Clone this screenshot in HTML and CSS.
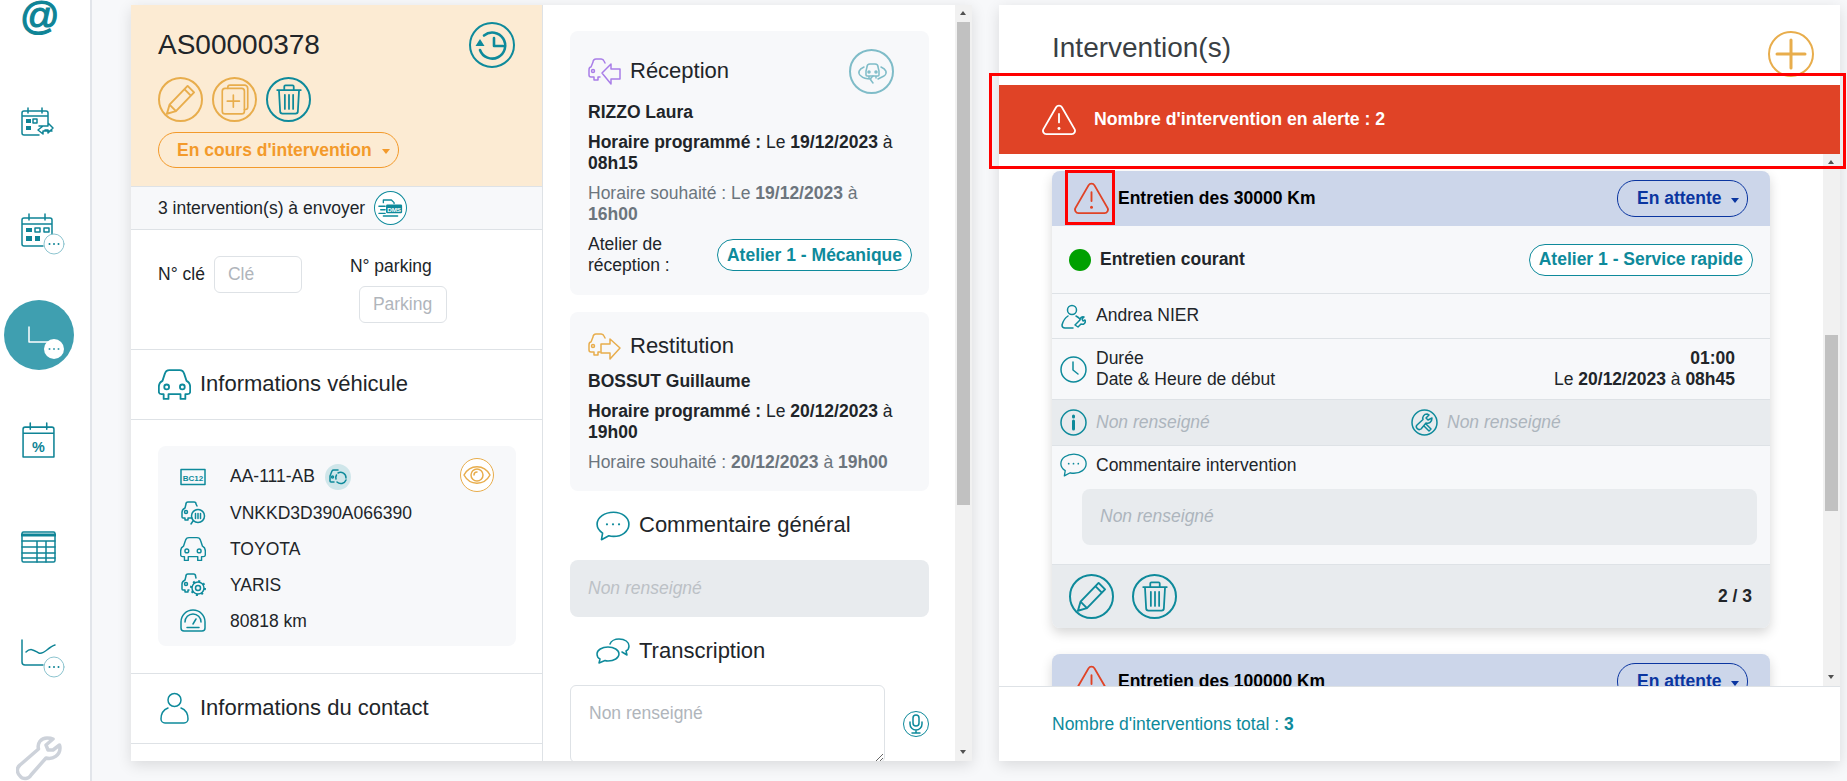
FILE: index.html
```html
<!DOCTYPE html>
<html lang="fr">
<head>
  <meta charset="UTF-8">
  <title>AS00000378 - Interventions</title>
  <link rel="stylesheet" href="styles.css">
</head>
<body>

  <!-- Icons used more than once -->
  <svg class="defs" aria-hidden="true">
    <symbol id="i-pencil" viewBox="4 4 23 24"><path d="M5 27l2-7L21 5.500l5 5L12 25zM18.500 8l5 5M7 20l5 5" /></symbol>
    <symbol id="i-trash" viewBox="5 3 22 26"><path d="M6 8h20M12 8V5a1 1 0 0 1 1-1h6a1 1 0 0 1 1 1v3M7.500 8l1 18a2 2 0 0 0 2 2h11a2 2 0 0 0 2-2l1-18M12.500 12v12M16 12v12M19.500 12v12" /></symbol>
    <symbol id="i-car" viewBox="2.300 4.300 27.400 25.400"><path d="M6 14 8 8a4 4 0 0 1 4-3h8a4 4 0 0 1 4 3l2 6c2 1 3 3 3 5v4a2 2 0 0 1-2 2h-2v4h-4v-4H11v4H7v-4H5a2 2 0 0 1-2-2v-4c0-2 1-4 3-5z" /><circle cx="9.500" cy="19" r="2" /><circle cx="22.500" cy="19" r="2" /></symbol>
    <symbol id="i-alert" viewBox="2 3 28 26"><path d="M13.600 5.500a2.800 2.800 0 0 1 4.800 0l10.400 18a2.800 2.800 0 0 1-2.400 4.200H5.600a2.800 2.800 0 0 1-2.400-4.200zM16 11v7" /><circle class="solid" cx="16" cy="23" r="1.200" /></symbol>
    <symbol id="i-comment" viewBox="1 3 31 27"><path d="M17 4c7.500 0 14 4.500 14 11s-6.500 11-14 11c-1.500 0-3-.2-4.300-.6L6 29l1-6C4 21 2 18 2 15 2 8.500 9 4 17 4z" /><circle class="solid" cx="11" cy="15" r="1" /><circle class="solid" cx="16.500" cy="15" r="1" /><circle class="solid" cx="22" cy="15" r="1" /></symbol>
    <symbol id="i-more" viewBox="0 0 22 22"><circle cx="11" cy="11" r="10" /><circle class="solid" cx="6.500" cy="11" r="1" /><circle class="solid" cx="11" cy="11" r="1" /><circle class="solid" cx="15.500" cy="11" r="1" /></symbol>
  </svg>

  <div class="app">

    <nav class="sidebar">
      <a class="nav-item"><span class="nav-at">@</span></a>
      <a class="nav-item">
        <svg class="ico nav-cal" viewBox="0 0 35 32"><path d="M27 17V6a2 2 0 0 0-2-2H3a2 2 0 0 0-2 2v20a2 2 0 0 0 2 2h15M1 9h26M7 1v5M21 1v5M18 19h9v-3l5 5-5 5v-3h-3M22 19l-5 4 5 4v-3h9" /><rect class="solid" x="5" y="12" width="5" height="4" /><rect x="12" y="12" width="4" height="4" /><rect class="solid" x="5" y="19" width="5" height="4" /></svg>
      </a>
      <a class="nav-item">
        <svg class="ico nav-bubble" width="44" height="42" viewBox="0 0 44 42"><path d="M31 25V7a2 2 0 0 0-2-2H3a2 2 0 0 0-2 2v24a2 2 0 0 0 2 2h19M1 11h30M8 1v6M24 1v6" /><rect class="solid" x="5" y="15" width="6" height="4" /><rect x="14" y="15" width="5" height="4" /><rect x="23" y="15" width="5" height="4" /><rect class="solid" x="5" y="23" width="6" height="5" /><rect class="solid" x="14" y="23" width="5" height="5" /><svg x="22" y="20" width="22" height="22" class="more-thin"><use href="#i-more" /></svg></svg>
      </a>
      <a class="nav-item">
        <span class="nav-active">
          <svg class="ico-white" width="70" height="70" viewBox="0 0 70 70"><path d="M25 27v15h20" /><circle class="solid" cx="50" cy="49" r="10" /><circle class="dot" cx="45.500" cy="49" r="1" /><circle class="dot" cx="50" cy="49" r="1" /><circle class="dot" cx="54.500" cy="49" r="1" /></svg>
        </span>
      </a>
      <a class="nav-item">
        <svg class="ico nav-cal" viewBox="0 0 34 36"><path d="M4 5h26a2 2 0 0 1 2 2v27H2V7a2 2 0 0 1 2-2zM2 11h30M9 1v6M25 1v6" /><text class="nav-pct" x="17" y="29" text-anchor="middle">%</text></svg>
      </a>
      <a class="nav-item">
        <svg class="ico nav-cal" viewBox="0 0 35 32"><rect x="1" y="1" width="33" height="30" rx="1.500" /><path class="thick" d="M1 4h33" /><path d="M1 10h33M1 16h33M1 22h33M1 27h33M16 10v21M25 10v21" /></svg>
      </a>
      <a class="nav-item">
        <svg class="ico nav-bubble" width="44" height="39" viewBox="0 0 44 39"><path d="M1 1v22a3 3 0 0 0 3 3h18M5 13c5-5 9-1 13 1 5 2 9-6 16-8" /><svg x="22" y="17" width="22" height="22" class="more-thin"><use href="#i-more" /></svg></svg>
      </a>
      <a class="nav-item nav-wrench">
        <svg class="ico-grey" width="46" height="46" viewBox="0 0 46 46"><path d="M31 2c-6 0-10 5-8.500 11L4 29c-4 3-3 8 0 11 3 4 9 3 11-1l15-17c7 2 14-3 14-10 0-1 0-2-.5-3L37 14h-5l-2-5 7-6c-2-1-4-1-6-1z" /></svg>
      </a>
    </nav>

    <main class="content">

      <!-- Dossier -->
      <section class="panel panel-file">
        <div class="col-info">
          <div class="file-head">
            <div class="file-title-row">
              <h1 class="file-title">AS00000378</h1>
              <button class="round round-teal round-big"><svg class="stroke-bold" width="36" height="36" viewBox="0 0 36 36"><path d="M10 8.500A13 13 0 1 1 6 23M20 11v8h9" /><path class="solid" d="M1.500 19h9L6 12z" /></svg></button>
            </div>
            <div class="file-actions">
              <button class="round round-orange"><svg width="31" height="31"><use href="#i-pencil" /></svg></button>
              <button class="round round-orange"><svg width="28" height="31" viewBox="4 2 25 28"><path d="M10 6V5a2 2 0 0 1 2-2h13a3 3 0 0 1 3 3v17a2 2 0 0 1-2 2h-1" /><rect x="5" y="6" width="20" height="23" rx="2.500" /><path d="M15 12v11M9.500 17.500h11" /></svg></button>
              <button class="round round-teal"><svg width="26" height="31"><use href="#i-trash" /></svg></button>
            </div>
            <div class="pill pill-status">En cours d'intervention <span class="caret"></span></div>
          </div>

          <div class="send-row">
            3 intervention(s) à envoyer
            <span class="round round-teal round-send"><svg width="25" height="20" viewBox="0 0 28 22"><path d="M6 5V2h9l3 3v1M1 9h7M3 13h5M1 17h7M6 20h16" /><rect class="solid" x="9" y="7" width="18" height="10" rx="1.500" /><text class="dms" x="18" y="15" text-anchor="middle">DMS</text></svg></span>
          </div>

          <div class="key-form">
            <div class="key-field">
              <label>N° clé</label>
              <input class="field-input" placeholder="Clé">
            </div>
            <div class="parking-field">
              <label>N° parking</label>
              <input class="field-input" placeholder="Parking">
            </div>
          </div>

          <h2 class="section-title"><svg class="ico-teal" width="33" height="33"><use href="#i-car" /></svg><span>Informations véhicule</span></h2>

          <div class="vehicle-wrap">
            <div class="vehicle-box">
              <div class="vehicle-row vehicle-row-first">
                <svg class="ico-teal" width="26" height="26" viewBox="0 0 26 26"><rect x="1" y="5.500" width="24" height="15" /><text class="plate" x="13" y="16.500" text-anchor="middle">BC12</text></svg>
                AA-111-AB
                <span class="swap-badge"><svg class="ico-teal" width="20" height="20" viewBox="0 0 20 20"><path d="M6 15H3a1 1 0 0 1-1-1V9l2-5a2 2 0 0 1 2-1h4" /><circle cx="4.500" cy="10" r="1" /><path d="M10 6a5.500 5.500 0 0 1 8 5M18 13a5.500 5.500 0 0 1-9 2M8 12a5 5 0 0 1 .5-4" /></svg></span>
                <button class="round round-orange round-eye"><svg width="28" height="20" viewBox="0 0 28 20"><path d="M1 10c6-11 20-11 26 0-6 11-20 11-26 0z" /><circle cx="14" cy="10" r="6" /><path d="M11 10a3 3 0 0 1 3-3" /></svg></button>
              </div>
              <div class="vehicle-row">
                <svg class="ico-teal" width="26" height="26" viewBox="0 0 26 26"><path d="M17 6l-1-2a2 2 0 0 0-2-2H8a2 2 0 0 0-2 2L5 8c-2 1-3 2-3 4v5a1 1 0 0 0 1 1h2v2h3v-2h4" /><circle cx="6" cy="12" r="1.500" /><circle cx="18" cy="16" r="6.500" /><path d="M15.500 13.500v5M18 13.500v5M20.500 13.500v5M13 21l-2 3" /></svg>
                VNKKD3D390A066390
              </div>
              <div class="vehicle-row">
                <svg class="ico-teal" width="26" height="26"><use href="#i-car" /></svg>
                TOYOTA
              </div>
              <div class="vehicle-row">
                <svg class="ico-teal" width="26" height="26" viewBox="0 0 26 26"><path d="M16 6l-.500-2a2 2 0 0 0-2-2H8a2 2 0 0 0-2 2L5 8c-2 1-3 2-3 4v5a1 1 0 0 0 1 1h2v2h3v-2h1" /><circle cx="6" cy="12" r="1.500" /><circle cx="18" cy="16" r="2.500" /><circle cx="18" cy="16" r="6" /><circle cx="18" cy="16" r="7" stroke-dasharray="2 3.500" stroke-width="2" stroke-linecap="butt" /></svg>
                YARIS
              </div>
              <div class="vehicle-row">
                <svg class="ico-teal" width="26" height="26" viewBox="0 0 26 26"><path d="M4 23a3 3 0 0 1-3-3v-6a12 12 0 0 1 24 0v6a3 3 0 0 1-3 3zM5 14a8 8 0 0 1 16 0M7 19.500h12M13 16l3-5" /></svg>
                80818 km
              </div>
            </div>
          </div>

          <h2 class="section-title"><svg class="ico-teal" width="33" height="33" viewBox="0 0 33 33"><circle cx="16.500" cy="8" r="6.500" /><path d="M10 16C5 18 3 22 3 27a4 4 0 0 0 4 4h19a4 4 0 0 0 4-4c0-5-2-9-7-11" /></svg><span>Informations du contact</span></h2>
        </div>

        <div class="col-times">
          <div class="time-box">
            <div class="time-head time-head-tall">
              <svg class="ico-purple" width="34" height="27" viewBox="0 0 34 27"><path d="M13 19h-2v3H7v-3H4a2 2 0 0 1-2-2v-5c0-2 1-3 2-3l2-5a3 3 0 0 1 3-3h5a3 3 0 0 1 3 2l1 2" /><circle cx="6" cy="13" r="1.500" /><path d="M15 15l9-9v5h9v10h-9v5z" /></svg>
              <h3>Réception</h3>
              <button class="round round-pale"><svg class="ico-pale" width="32" height="32" viewBox="0 0 32 32"><path d="M10 15l1-4a3 3 0 0 1 3-3h5a3 3 0 0 1 3 3l1 4v4a1 1 0 0 1-1 1H11a1 1 0 0 1-1-1zM13 20v2M20 20v2" /><circle cx="13" cy="16" r="1" /><circle cx="20" cy="16" r="1" /><path d="M8 11C3 13 1 17 5 20c2 2 6 3 10 3M25 11c5 2 7 6 3 9-2 1-4 2-6 3M17 20l-3 3 3 4" /></svg></button>
            </div>
            <p class="strong">RIZZO Laura</p>
            <p><b>Horaire programmé :</b> Le <b>19/12/2023</b> à<br><b>08h15</b></p>
            <p class="muted">Horaire souhaité : Le <b>19/12/2023</b> à<br><b>16h00</b></p>
            <div class="workshop-row">
              <span class="workshop-label">Atelier de réception :</span>
              <span class="pill pill-teal">Atelier 1 - Mécanique</span>
            </div>
          </div>

          <div class="time-box">
            <div class="time-head">
              <svg class="ico-orange" width="34" height="27" viewBox="0 0 34 27"><path d="M13 19h-2v3H7v-3H4a2 2 0 0 1-2-2v-5c0-2 1-3 2-3l2-5a3 3 0 0 1 3-3h5a3 3 0 0 1 3 2l1 2" /><circle cx="6" cy="13" r="1.500" /><path d="M33 15l-10-9v5h-9v9h9v6z" /></svg>
              <h3>Restitution</h3>
            </div>
            <p class="strong">BOSSUT Guillaume</p>
            <p><b>Horaire programmé :</b> Le <b>20/12/2023</b> à<br><b>19h00</b></p>
            <p class="muted">Horaire souhaité : <b>20/12/2023</b> à <b>19h00</b></p>
          </div>

          <div class="note-title note-title-first"><svg class="ico-teal" width="34" height="30"><use href="#i-comment" /></svg><h3>Commentaire général</h3></div>
          <div class="note-empty">Non renseigné</div>

          <div class="note-title"><svg class="ico-teal" width="34" height="26" viewBox="0 0 34 26"><path d="M12 9c6 0 11 3 11 7s-5 7-11 7c-1 0-2 0-3-.5L3 25l1-4c-2-1-3-3-3-5 0-4 5-7 11-7z" /><path d="M14 6c1-3 5-5 9-5 6 0 10 3 10 7 0 2-1 4-3 5l1 4-5-3" /></svg><h3>Transcription</h3></div>
          <div class="transcript-row">
            <textarea class="transcript" placeholder="Non renseigné"></textarea>
            <button class="round round-teal round-mic"><svg width="20" height="20" viewBox="0 0 20 20"><rect x="7" y="1" width="6" height="11" rx="3" /><path d="M4 8v2a6 6 0 0 0 12 0V8M10 16v3M6 19h8" /></svg></button>
          </div>
        </div>

        <div class="vbar">
          <span class="arrow-up"></span>
          <span class="thumb thumb-file"></span>
          <span class="arrow-down"></span>
        </div>
      </section>

      <!-- Interventions -->
      <section class="panel panel-jobs">
        <div class="jobs-head">
          <h2 class="jobs-title">Intervention(s)</h2>
          <button class="round round-orange round-add"><svg width="32" height="32" viewBox="0 0 32 32"><path class="thick" d="M2 16h28M16 2v28" /></svg></button>
        </div>

        <div class="alert-bar">
          <svg class="ico-white-line" width="34" height="32"><use href="#i-alert" /></svg>
          Nombre d'intervention en alerte : 2
        </div>

        <div class="jobs-body">
          <div class="jobs-list">
            <article class="job-card">
              <header class="job-head">
                <svg class="ico-red" width="35" height="33"><use href="#i-alert" /></svg>
                <span class="job-name">Entretien des 30000 Km</span>
                <span class="pill pill-blue">En attente <span class="caret"></span></span>
                <span class="mark-small"></span>
              </header>
              <div class="job-row job-type">
                <span class="dot-green"></span>
                <b>Entretien courant</b>
                <span class="pill pill-teal">Atelier 1 - Service rapide</span>
              </div>
              <div class="job-row job-person">
                <span class="cell"><svg class="ico-teal" width="25" height="25" viewBox="0 0 25 25"><circle cx="11" cy="6" r="4.500" /><path d="M7 12c-3 2-5 5-6 9 0 2 1 3 3 3h8M15 12c2 1 3 2 4 3" /><path d="M14 21l5-5a3 3 0 0 1 4-3l-2 2 1 2 2-1a3 3 0 0 1-4 4l-3 3z" /></svg></span>
                <span>Andrea NIER</span>
              </div>
              <div class="job-row job-time">
                <span class="cell"><svg class="ico-teal" width="27" height="27" viewBox="0 0 27 27"><circle cx="13.500" cy="13.500" r="12.500" /><path d="M13 6v8l5 4" /></svg></span>
                <div>Durée<br>Date &amp; Heure de début</div>
                <div class="job-time-values"><b>01:00</b><br>Le <b>20/12/2023</b> à <b>08h45</b></div>
              </div>
              <div class="job-row job-empty">
                <div class="job-empty-item">
                  <span class="cell"><svg class="ico-teal" width="27" height="27" viewBox="0 0 27 27"><circle cx="13.500" cy="13.500" r="12.500" /><path class="thick" d="M13.500 12v8M13.500 7v1" /></svg></span>
                  <i>Non renseigné</i>
                </div>
                <div class="job-empty-item">
                  <span class="cell"><svg class="ico-teal" width="27" height="27" viewBox="0 0 27 27"><circle cx="13.500" cy="13.500" r="12.500" /><path d="M16 5c-3 0-5 3-4 5.500L6 16c-2 2 1 6 4 4l5-6c3 1 6-1 6-5l-4 2-2-2 3-3zM15 15l5 5-2 2-5-5" /></svg></span>
                  <i>Non renseigné</i>
                </div>
              </div>
              <div class="job-comment">
                <div class="job-comment-head">
                  <span class="cell"><svg class="ico-teal" width="27" height="24"><use href="#i-comment" /></svg></span>
                  Commentaire intervention
                </div>
                <div class="job-comment-box"><i>Non renseigné</i></div>
              </div>
              <footer class="job-foot">
                <button class="round round-teal"><svg width="31" height="31"><use href="#i-pencil" /></svg></button>
                <button class="round round-teal"><svg width="26" height="31"><use href="#i-trash" /></svg></button>
                <b class="job-count">2 / 3</b>
              </footer>
            </article>

            <article class="job-card">
              <header class="job-head">
                <svg class="ico-red" width="35" height="33"><use href="#i-alert" /></svg>
                <span class="job-name">Entretien des 100000 Km</span>
                <span class="pill pill-blue">En attente <span class="caret"></span></span>
              </header>
            </article>
          </div>

          <div class="vbar">
            <span class="arrow-up"></span>
            <span class="thumb thumb-jobs"></span>
            <span class="arrow-down"></span>
          </div>
        </div>

        <div class="jobs-foot">Nombre d'interventions total : <b>3</b></div>
      </section>
    </main>
  </div>

  <!-- Red frame drawn over the alert bar -->
  <div class="mark-alert"></div>

</body>
</html>
```

FILE: styles.css
```css
/* Basic Styles */
* {
  box-sizing: border-box;
}

body {
  font-family: "Liberation Sans", Arial, sans-serif;
  font-size: 17.5px;
  line-height: 21px;
  color: #212529;
  background-color: #f7f8fa;
  margin: 0;
  height: 781px;
  overflow: hidden;
}

h1, h2, h3, p {
  margin: 0;
  font-weight: 400;
}

button {
  padding: 0;
  font: inherit;
}

svg {
  fill: none;
  stroke: currentColor;
  stroke-width: 1.5;
  stroke-linecap: round;
  stroke-linejoin: round;
  flex: none;
}

svg .solid {
  fill: currentColor;
  stroke: none;
}

svg .thick {
  stroke-width: 3;
}

.defs {
  display: none;
}

.app {
  display: flex;
  height: 781px;
}

/* Sidebar */
.sidebar {
  width: 92px;
  height: 781px;
  flex: none;
  overflow: hidden;
  background-color: #fff;
  border-right: 2px solid #e2e5ea;
  color: #0f8496;
}

.nav-item {
  display: flex;
  align-items: center;
  height: 106px;
  padding-left: 20px;
}

.nav-item:first-child {
  margin-top: -36px;
}

.nav-at {
  font-size: 39px;
  line-height: 40px;
  padding-bottom: 3px;
  color: #0f8496;
  -webkit-text-stroke: 1.200px #0f8496;
}

.nav-cal {
  width: 35px;
  margin-left: 1px;
}

.nav-bubble {
  margin-top: 10px;
  margin-left: 1px;
}

.nav-pct {
  font-family: "Liberation Sans", sans-serif;
  font-size: 14px;
  font-weight: 700;
  fill: currentColor;
  stroke: none;
}

.more-thin {
  fill: #fff;
  stroke: #8cc4cf;
  stroke-width: 1;
  color: #0f8496;
}

.nav-active {
  display: block;
  width: 70px;
  height: 70px;
  margin-left: -16px;
  border-radius: 50%;
  background-color: #3f9fb0;
}

.ico-white {
  display: block;
  stroke: #fff;
  color: #fff;
}

.ico-white .dot {
  fill: #3f9fb0;
  stroke: none;
}

.nav-wrench {
  padding-left: 16px;
}

.ico-grey {
  stroke: #cdd2da;
  stroke-width: 3.500;
}

/* Colored icons */
.ico-teal {
  color: #0e8a9b;
}

.ico-purple {
  color: #a97ee8;
}

.ico-orange {
  color: #e8ad4c;
}

.ico-pale {
  color: #7fbcc8;
}

.ico-red {
  color: #e04326;
}

.ico-white-line {
  color: #fff;
}

.stroke-bold {
  stroke-width: 2.600;
}

/* Round buttons */
.round {
  display: inline-flex;
  align-items: center;
  justify-content: center;
  flex: none;
  width: 45px;
  height: 45px;
  border-radius: 50%;
  background-color: transparent;
}

.round-orange {
  border: 2px solid #e8ad4c;
  color: #e8ad4c;
}

.round-teal {
  border: 2px solid #0e8a9b;
  color: #0e8a9b;
}

.round-big {
  width: 46px;
  height: 46px;
}

.round-pale {
  margin-left: auto;
  margin-right: 18px;
  border: 2px solid #7fbcc8;
}

.round-send {
  width: 33px;
  height: 34px;
  border-width: 1px;
  background-color: #fff;
}

.round-eye {
  width: 34px;
  height: 34px;
  border-width: 1px;
  margin-left: auto;
  margin-top: -3px;
  background-color: #fff;
}

.round-mic {
  width: 26px;
  height: 26px;
  border-width: 1px;
  margin-left: 18px;
}

.round-add {
  width: 46px;
  height: 46px;
}

/* Pills */
.pill {
  display: inline-flex;
  align-items: center;
  font-weight: 700;
  background-color: #fff;
  border: 1px solid;
  border-radius: 18px;
  white-space: nowrap;
}

.pill-status {
  width: 241px;
  height: 36px;
  margin-top: 10px;
  padding-left: 18px;
  color: #f39a2b;
  background-color: transparent;
}

.pill-teal {
  height: 32px;
  padding: 0 9px;
  color: #0e8a9b;
}

.pill-blue {
  width: 131px;
  height: 37px;
  margin-left: auto;
  padding-left: 19px;
  color: #0a35a0;
  background-color: transparent;
}

.caret {
  width: 0;
  height: 0;
  margin-left: auto;
  margin-right: 8px;
  margin-top: 3px;
  border-left: 4px solid transparent;
  border-right: 4px solid transparent;
  border-top: 5px solid currentColor;
}

/* Panels */
.content {
  display: flex;
  gap: 27px;
  padding: 5px 0 0 39px;
}

.panel {
  width: 841px;
  height: 756px;
  background-color: #fff;
  box-shadow: 0 4px 14px rgba(0, 0, 0, 0.12);
  overflow: hidden;
}

.panel-file {
  display: flex;
}

.col-info {
  width: 412px;
  flex: none;
  border-right: 1px solid #dee2e6;
}

.file-head {
  height: 181px;
  padding: 17px 27px 0;
  background-color: #fcebd3;
}

.file-title-row {
  display: flex;
  align-items: center;
  justify-content: space-between;
}

.file-title {
  font-size: 28px;
  line-height: 34px;
}

.file-actions {
  display: flex;
  gap: 9px;
  margin-top: 9px;
}

.send-row {
  display: flex;
  align-items: center;
  gap: 9px;
  height: 44px;
  padding-left: 27px;
  background-color: #f7f8fa;
  border-top: 1px solid #dee2e6;
  border-bottom: 1px solid #dee2e6;
}

.key-form {
  display: flex;
  height: 120px;
  padding: 26px 27px 0;
  border-bottom: 1px solid #dee2e6;
}

.key-field {
  display: flex;
  align-items: center;
  gap: 9px;
  height: 37px;
}

.parking-field {
  margin-left: 48px;
}

.parking-field .field-input {
  display: block;
  margin: 9px 0 0 9px;
}

.field-input {
  width: 88px;
  height: 37px;
  padding: 0 13px;
  font: inherit;
  border: 1px solid #dee2e6;
  border-radius: 6px;
}

.field-input::placeholder,
.transcript::placeholder {
  color: #b0b5bb;
  opacity: 1;
}

.section-title {
  display: flex;
  align-items: center;
  gap: 9px;
  height: 70px;
  padding-left: 27px;
  font-size: 22px;
  border-bottom: 1px solid #dee2e6;
}

.section-title span {
  padding-bottom: 2px;
}

.vehicle-wrap {
  height: 254px;
  padding: 26px 26px 0 27px;
  border-bottom: 1px solid #dee2e6;
}

.vehicle-box {
  height: 200px;
  padding: 12px 22px 0;
  background-color: #f7f8fa;
  border-radius: 8px;
}

.vehicle-row {
  display: flex;
  align-items: center;
  gap: 24px;
  height: 36px;
}

.vehicle-row-first {
  height: 37px;
}

.swap-badge {
  display: flex;
  align-items: center;
  justify-content: center;
  width: 26px;
  height: 26px;
  margin-left: -14px;
  border-radius: 50%;
  background-color: #cfe6ea;
}

.plate {
  font-family: "Liberation Sans", sans-serif;
  font-size: 8px;
  font-weight: 700;
  fill: currentColor;
  stroke: none;
}

.dms {
  font-family: "Liberation Sans", sans-serif;
  font-size: 7px;
  font-weight: 700;
  fill: #fff;
  stroke: none;
}

/* Reception and restitution */
.col-times {
  width: 412px;
  flex: none;
  padding: 26px 26px 0 27px;
  overflow: hidden;
}

.time-box {
  padding: 18px 17px 18px 18px;
  margin-bottom: 17px;
  background-color: #f7f8fa;
  border-radius: 8px;
}

.time-head {
  display: flex;
  align-items: center;
  gap: 9px;
  height: 32px;
  margin-left: -1px;
}

.time-head-tall {
  height: 45px;
  margin-bottom: -1px;
}

.time-head h3,
.note-title h3 {
  font-size: 22px;
  padding-bottom: 2px;
}

.time-box p,
.workshop-row {
  margin-top: 9px;
}

.time-box .workshop-row {
  padding-bottom: 1px;
}

.strong {
  font-weight: 700;
}

.muted {
  color: #6c757d;
}

.workshop-row {
  display: flex;
  align-items: center;
  justify-content: space-between;
}

.workshop-label {
  width: 120px;
}

.note-title {
  display: flex;
  align-items: center;
  gap: 9px;
  height: 34px;
  padding-left: 26px;
}

.note-title-first {
  height: 35px;
}

.note-empty {
  height: 57px;
  margin: 17px 0;
  padding: 18px 18px 0;
  font-style: italic;
  color: #bcc1c6;
  background-color: #e8ebee;
  border-radius: 8px;
}

.transcript-row {
  display: flex;
  align-items: center;
  margin-top: 17px;
}

.transcript {
  width: 315px;
  height: 78px;
  padding: 17px 18px;
  font: inherit;
  border: 1px solid #dee2e6;
  border-radius: 6px;
}

/* Fake scrollbars, same look as the browser ones */
.vbar {
  display: flex;
  flex-direction: column;
  align-items: center;
  width: 17px;
  flex: none;
  background-color: #f1f1f1;
}

.arrow-up,
.arrow-down {
  display: block;
  width: 17px;
  height: 17px;
  flex: none;
  position: relative;
}

.arrow-up::after,
.arrow-down::after {
  content: "";
  position: absolute;
  left: 5px;
  top: 6px;
  border-left: 3.500px solid transparent;
  border-right: 3.500px solid transparent;
}

.arrow-up::after {
  border-bottom: 4px solid #505050;
}

.arrow-down::after {
  border-top: 4px solid #505050;
}

.arrow-down {
  margin-top: auto;
}

.thumb {
  display: block;
  width: 13px;
  background-color: #c1c1c1;
}

.thumb-file {
  height: 483px;
}

.thumb-jobs {
  height: 176px;
  margin-top: 164px;
}

/* Interventions */
.panel-jobs {
  display: flex;
  flex-direction: column;
}

.jobs-head {
  display: flex;
  justify-content: space-between;
  height: 80px;
  flex: none;
  padding: 26px 26px 0 53px;
}

.jobs-title {
  font-size: 28px;
  line-height: 34px;
  color: #3a3f44;
}

.alert-bar {
  display: flex;
  align-items: center;
  gap: 18px;
  height: 69px;
  flex: none;
  padding-left: 43px;
  font-size: 17.700px;
  font-weight: 700;
  color: #fff;
  background-color: #e04326;
}

.jobs-body {
  display: flex;
  height: 532px;
  flex: none;
  overflow: hidden;
}

.jobs-list {
  flex: 1;
  padding: 17px 53px 0;
  overflow: hidden;
}

.job-card {
  width: 718px;
  margin-bottom: 26px;
  background-color: #f7f8fa;
  border-radius: 8px;
  box-shadow: 0 5px 12px rgba(0, 0, 0, 0.16);
}

.job-head {
  display: flex;
  align-items: center;
  gap: 9px;
  position: relative;
  height: 55px;
  padding: 0 22px;
  background-color: #ccd6ea;
  border-radius: 8px 8px 0 0;
}

.job-name {
  font-weight: 700;
  color: #000;
}

.mark-small {
  position: absolute;
  left: 13px;
  top: -1px;
  width: 50px;
  height: 55px;
  border: 3px solid #f00;
}

.job-row {
  display: flex;
  align-items: center;
  gap: 9px;
  padding-left: 8px;
  border-bottom: 1px solid #dee2e6;
}

.cell {
  display: flex;
  justify-content: center;
  width: 27px;
  flex: none;
}

.job-type {
  height: 68px;
  padding: 0 17px;
}

.job-type .pill {
  margin-left: auto;
}

.dot-green {
  width: 22px;
  height: 22px;
  background-color: #00a000;
  border-radius: 50%;
}

.job-person {
  height: 45px;
}

.job-person span:last-child {
  padding-bottom: 2px;
}

.job-time {
  height: 61px;
  padding-right: 35px;
}

.job-time-values {
  margin-left: auto;
  text-align: right;
}

.job-empty {
  height: 46px;
  gap: 0;
  color: #adb5bd;
  background-color: #e8ebee;
}

.job-empty-item {
  display: flex;
  align-items: center;
  gap: 9px;
  width: 351px;
}

.job-comment {
  height: 118px;
  padding-top: 7px;
}

.job-comment-head {
  display: flex;
  align-items: center;
  gap: 9px;
  padding-left: 8px;
}

.job-comment-box {
  height: 56px;
  margin: 12px 13px 0 30px;
  padding: 17px 18px;
  color: #adb5bd;
  background-color: #e8ebee;
  border-radius: 8px;
}

.job-foot {
  display: flex;
  align-items: center;
  gap: 18px;
  height: 64px;
  padding: 0 18px 0 17px;
  background-color: #e8ebee;
  border-top: 1px solid #dee2e6;
  border-radius: 0 0 8px 8px;
}

.job-count {
  margin-left: auto;
}

.jobs-foot {
  display: flex;
  align-items: center;
  gap: 5px;
  flex: 1;
  padding-left: 53px;
  color: #0e8a9b;
  border-top: 1px solid #dee2e6;
}

/* Annotation over the screenshot */
.mark-alert {
  position: absolute;
  left: 989px;
  top: 73px;
  width: 857px;
  height: 96px;
  border: 3px solid #f00;
}
```
